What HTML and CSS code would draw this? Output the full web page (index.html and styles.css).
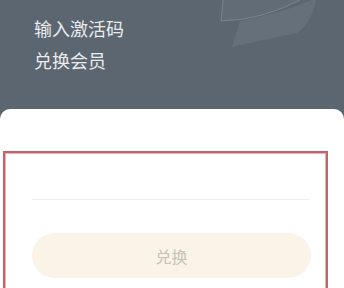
FILE: index.html
```html
<!DOCTYPE html>
<html lang="zh-CN">
<head>
<meta charset="utf-8">
<link rel="stylesheet" href="styles.css">
</head>
<body>
<div class="page">
  <header class="header">
    <svg class="deco" width="344" height="60" viewBox="0 0 344 60">
      <path d="M223 0 L221 21 Q262 20 300 0" fill="rgba(255,255,255,0.04)" stroke="rgba(255,255,255,0.18)" stroke-width="1"/>
      <path d="M240 21 Q278 14 312 0 L316 0 Q312 22 297 33 Q262 40 232 47 Z" fill="rgba(255,255,255,0.07)"/>
    </svg>
    <div class="title">输入激活码</div>
    <div class="title">兑换会员</div>
  </header>
  <main class="card">
    <div class="highlight">
      <div class="field"></div>
      <div class="divider"></div>
      <button class="btn">兑换</button>
    </div>
  </main>
</div>
</body>
</html>
```
FILE: styles.css
```css
html, body {
  margin: 0;
  padding: 0;
}
body {
  background: #5b6671;
  font-family: "Noto Sans CJK SC", "Noto Sans", sans-serif;
  width: 344px;
  height: 288px;
  overflow: hidden;
}
.page {
  display: flex;
  flex-direction: column;
  height: 288px;
}
.header {
  position: relative;
  flex-shrink: 0;
  height: 109px;
  box-sizing: border-box;
  padding: 12px 0 0 34px;
}
.deco {
  position: absolute;
  left: 0;
  top: 0;
}
.title {
  position: relative;
  font-size: 18px;
  line-height: 32px;
  color: #e9ebed;
}
.card {
  flex: 1;
  min-height: 0;
  overflow: hidden;
  background: #ffffff;
  border-radius: 10px 10px 0 0;
  padding-top: 42px;
}
.highlight {
  margin-left: 3px;
  width: 325px;
  height: 160px;
  box-sizing: border-box;
  border: 2px solid #c4636c;
  border-bottom: none;
  box-shadow: inset 0 0 0 1px #e6b2b6;
  padding: 0 0 0 27px;
}
.field {
  height: 46px;
}
.divider {
  width: 277px;
  height: 1px;
  background: #ededed;
}
.btn {
  display: block;
  margin-top: 33px;
  width: 279px;
  height: 45px;
  border: none;
  border-radius: 23px;
  background: #faf3e8;
  color: #c9c1b6;
  font-family: "Noto Sans CJK SC", sans-serif;
  font-size: 16px;
  padding: 0;
}
```
